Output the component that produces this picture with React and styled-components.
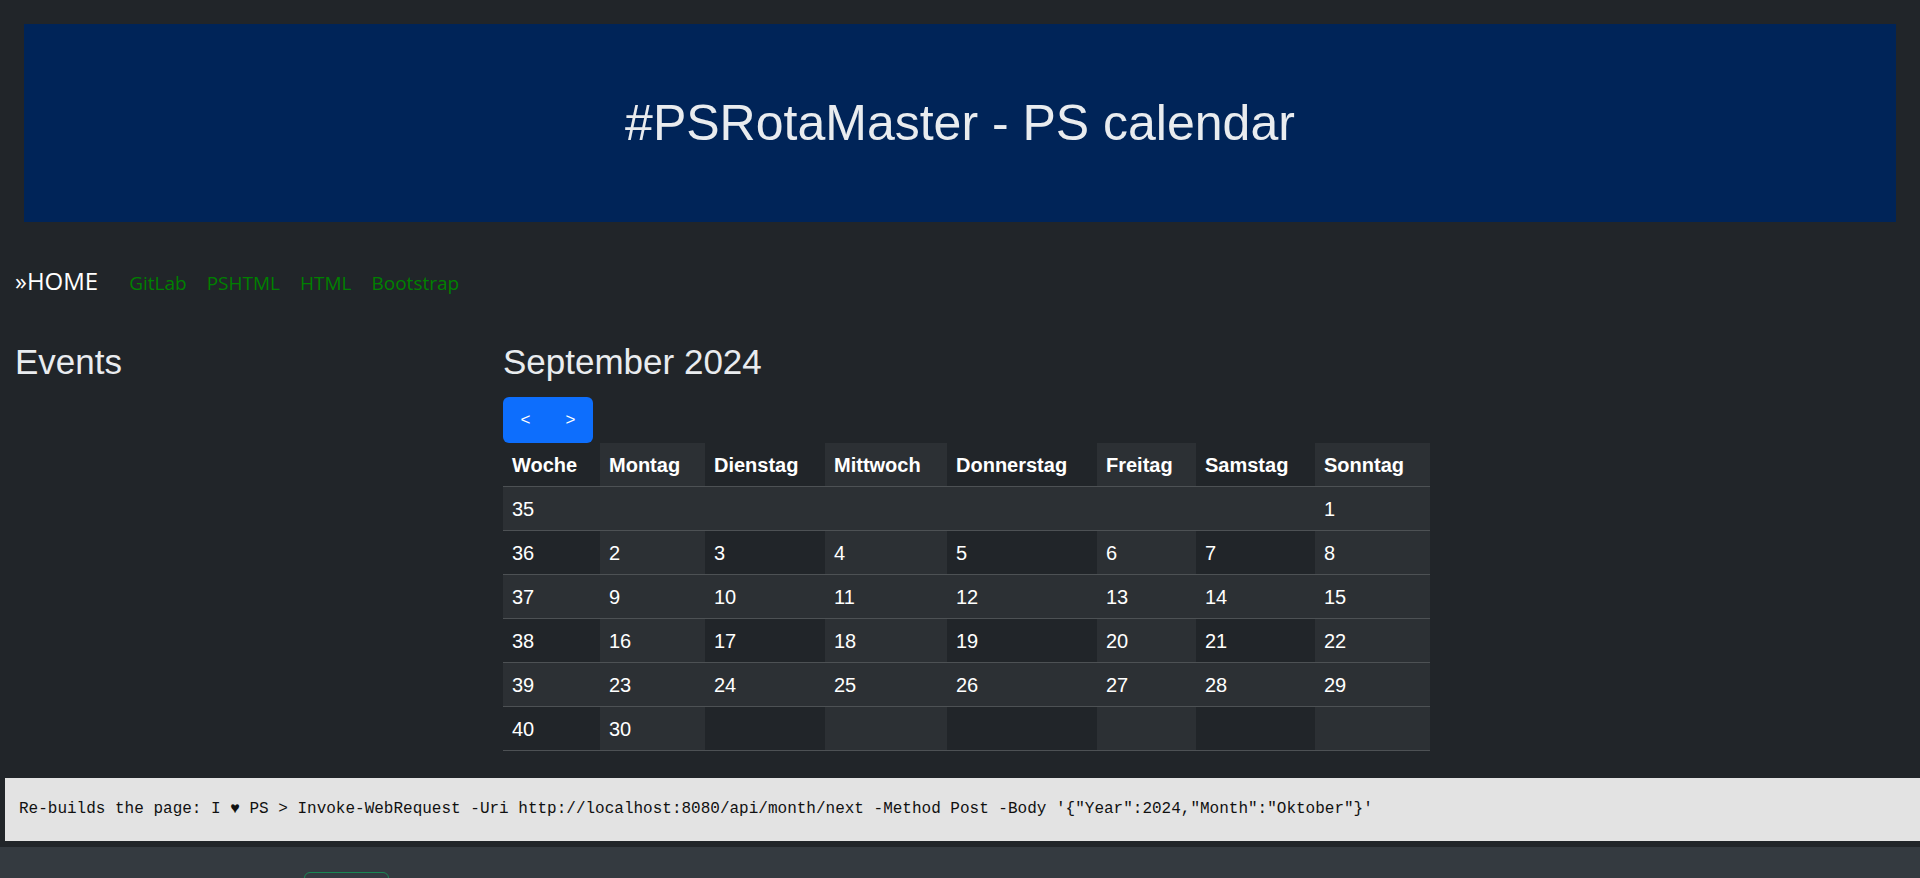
import React from 'react';
import styled, { createGlobalStyle } from 'styled-components';

const GlobalStyle = createGlobalStyle`
  html {
    scrollbar-width: none;
  }
  body {
    margin: 0;
    background-color: #212529;
    color: #dee2e6;
    font-family: "Liberation Sans", Arial, sans-serif;
  }
`;

const Banner = styled.header`
  margin: 24px 24px 0;
  height: 198px;
  background-color: #002458;
  display: flex;
  align-items: center;
  justify-content: center;
`;

const BannerTitle = styled.h1`
  margin: 0;
  font-size: 50px;
  font-weight: 400;
  color: #e9ecef;
`;

const Nav = styled.nav`
  display: flex;
  align-items: baseline;
  gap: 20px;
  height: 30px;
  margin-top: 44px;
  padding: 0 15px;
  font-family: "Open Sans", "Noto Sans", sans-serif;
`;

const HomeLink = styled.span`
  font-size: 24px;
  line-height: 30px;
  color: #fff;
  margin-right: 11px;
`;

const NavLink = styled.a`
  font-size: 19px;
  line-height: 30px;
  color: #008000;
  text-decoration: none;
`;

const Content = styled.main`
  display: grid;
  grid-template-columns: 488px 1fr;
  margin-top: 45px;
  padding: 0 15px;
`;

const Heading = styled.h2`
  margin: 0;
  font-size: 35px;
  line-height: 42px;
  font-weight: 400;
  color: #e9ecef;
`;

const ButtonGroup = styled.div`
  display: inline-flex;
  margin-top: 14px;
  background-color: #0d6efd;
  border-radius: 6px;
  overflow: hidden;
`;

const NavButton = styled.button`
  width: 45px;
  height: 46px;
  border: none;
  background: transparent;
  color: #fff;
  font-family: "Liberation Sans", Arial, sans-serif;
  font-size: 17px;
  cursor: pointer;
  padding: 0;
`;

const Table = styled.table`
  border-collapse: collapse;
  table-layout: fixed;
  width: 927px;
  color: #fff;
  font-size: 20px;
`;

const Col = styled.col`
  width: ${(p) => p.$w}px;
`;

const HeadCell = styled.th`
  box-sizing: border-box;
  height: 43px;
  padding: 3px 9px 0;
  text-align: left;
  font-weight: 700;
  white-space: nowrap;
  border-bottom: 1px solid #4d5154;
  background-color: ${(p) => (p.$light ? '#2c3034' : '#212529')};
`;

const Cell = styled.td`
  box-sizing: border-box;
  height: 44px;
  padding: 3px 9px 0;
  border-bottom: 1px solid #4d5154;
  background-color: ${(p) => (p.$light ? '#2c3034' : '#212529')};
`;

const CommandBox = styled.pre`
  margin: 27px 0 0 5px;
  padding: 20px 14px;
  background-color: #e3e3e3;
  color: #111;
  font-family: "Liberation Mono", "DejaVu Sans Mono", monospace;
  font-size: 16px;
  line-height: 23px;
  white-space: pre;
  overflow: hidden;
`;

const Footer = styled.footer`
  margin-top: 6px;
  padding: 25px 0 20px 304px;
  background-color: #343a40;
`;

const OutlineButton = styled.button`
  display: block;
  width: 85px;
  height: 38px;
  border: 1px solid #198754;
  border-radius: 6px;
  background: transparent;
`;

const days = ['Woche', 'Montag', 'Dienstag', 'Mittwoch', 'Donnerstag', 'Freitag', 'Samstag', 'Sonntag'];
const widths = [97, 105, 120, 122, 150, 99, 119, 115];

const weeks = [
  [35, '', '', '', '', '', '', 1],
  [36, 2, 3, 4, 5, 6, 7, 8],
  [37, 9, 10, 11, 12, 13, 14, 15],
  [38, 16, 17, 18, 19, 20, 21, 22],
  [39, 23, 24, 25, 26, 27, 28, 29],
  [40, 30, '', '', '', '', '', ''],
];

function App() {
  return (
    <>
      <GlobalStyle />
      <Banner>
        <BannerTitle>#PSRotaMaster - PS calendar</BannerTitle>
      </Banner>

      <Nav>
        <HomeLink>»HOME</HomeLink>
        <NavLink href="#">GitLab</NavLink>
        <NavLink href="#">PSHTML</NavLink>
        <NavLink href="#">HTML</NavLink>
        <NavLink href="#">Bootstrap</NavLink>
      </Nav>

      <Content>
        <div>
          <Heading>Events</Heading>
        </div>
        <div>
          <Heading>September 2024</Heading>
          <ButtonGroup>
            <NavButton>&lt;</NavButton>
            <NavButton>&gt;</NavButton>
          </ButtonGroup>
          <Table>
            <colgroup>
              {widths.map((w, i) => (
                <Col key={i} $w={w} />
              ))}
            </colgroup>
            <thead>
              <tr>
                {days.map((d, i) => (
                  <HeadCell key={d} $light={i % 2 === 1}>{d}</HeadCell>
                ))}
              </tr>
            </thead>
            <tbody>
              {weeks.map((week, r) => (
                <tr key={week[0]}>
                  {week.map((v, i) => (
                    <Cell key={i} $light={r % 2 === 0 || i % 2 === 1}>{v}</Cell>
                  ))}
                </tr>
              ))}
            </tbody>
          </Table>
        </div>
      </Content>

      <CommandBox>{`Re-builds the page: I ♥ PS > Invoke-WebRequest -Uri http://localhost:8080/api/month/next -Method Post -Body '{"Year":2024,"Month":"Oktober"}'`}</CommandBox>

      <Footer>
        <OutlineButton aria-label="top" />
      </Footer>
    </>
  );
}

export default App;
